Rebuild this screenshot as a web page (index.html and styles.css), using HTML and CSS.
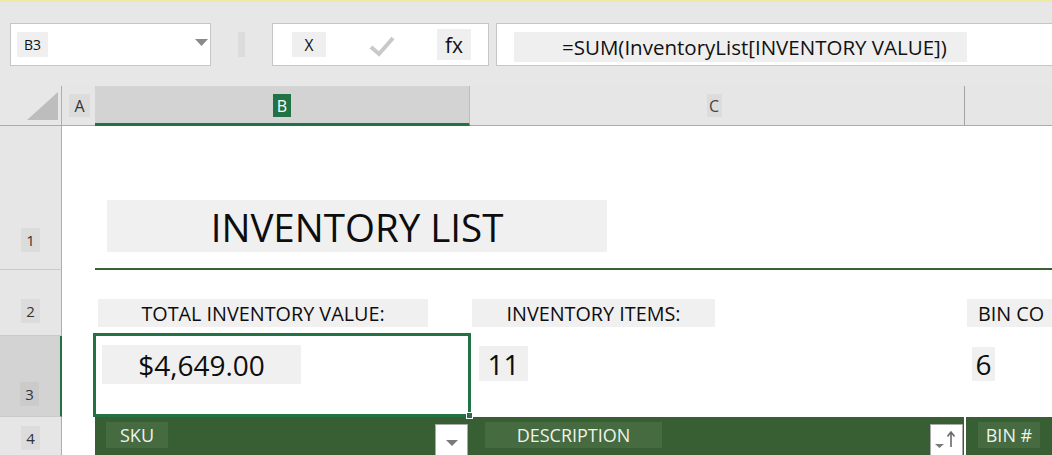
FILE: index.html
```html
<!DOCTYPE html>
<html>
<head>
<meta charset="utf-8">
<link rel="stylesheet" href="styles.css">
</head>
<body>
<div class="toolbar">
  <div class="namebox">
    <span class="chip nb-chip">B3</span>
    <svg class="nb-caret" width="13" height="7" viewBox="0 0 13 7"><path d="M0 0 H13 L6.5 7 Z" fill="#8a8a8a"/></svg>
  </div>
  <div class="divider"></div>
  <div class="fxbox">
    <span class="chip x-chip">X</span>
    <svg class="check" width="26" height="22" viewBox="0 0 26 22"><path d="M2 12 L10 19 L24 3" fill="none" stroke="#c9c9c9" stroke-width="4"/></svg>
    <span class="chip fx-chip">fx</span>
  </div>
  <div class="formula">
    <span class="chip formula-chip">=SUM(InventoryList[INVENTORY VALUE])</span>
  </div>
</div>

<div class="sheet">
  <div class="corner">
    <svg width="31" height="28" viewBox="0 0 31 28"><path d="M0 28 L31 28 L31 0 Z" fill="#bdbdbd"/></svg>
  </div>
  <div class="colhead col-a"><span class="chip hchip">A</span></div>
  <div class="colhead col-b"><span class="chip hchip green-chip">B</span></div>
  <div class="colhead col-c"><span class="chip hchip">C</span></div>
  <div class="colhead col-d"></div>

  <div class="rowhead rh1"><span class="chip rchip">1</span></div>
  <div class="cell"></div>
  <div class="cell title-cell"><span class="chip title-chip">INVENTORY LIST</span></div>

  <div class="rowhead rh2"><span class="chip rchip">2</span></div>
  <div class="cell"></div>
  <div class="cell label-cell lb"><span class="chip label-chip total">TOTAL INVENTORY VALUE:</span></div>
  <div class="cell label-cell lc"><span class="chip label-chip items">INVENTORY ITEMS:</span></div>
  <div class="cell label-cell ld"><span class="chip label-chip bins">BIN CO</span></div>

  <div class="rowhead rh3 selected-row"><span class="chip rchip">3</span></div>
  <div class="cell"></div>
  <div class="cell value-cell vb">
    <span class="chip value-chip total-val">$4,649.00</span>
    <div class="selection"><span class="fill-handle"></span></div>
  </div>
  <div class="cell value-cell vc"><span class="chip value-chip items-val">11</span></div>
  <div class="cell value-cell vd"><span class="chip value-chip bins-val">6</span></div>

  <div class="rowhead rh4"><span class="chip rchip">4</span></div>
  <div class="cell"></div>
  <div class="cell th th-b">
    <span class="chip th-chip sku">SKU</span>
    <span class="filter-btn">
      <svg width="12" height="6" viewBox="0 0 12 6"><path d="M0 0 H12 L6 6 Z" fill="#7a7a7a"/></svg>
    </span>
  </div>
  <div class="cell th th-c">
    <span class="chip th-chip desc">DESCRIPTION</span>
    <span class="filter-btn sort-btn">
      <svg width="26" height="26" viewBox="0 0 26 26"><path d="M3 19 H12 L7.5 23 Z" fill="#7a7a7a"/><path d="M19 22 V8 M15.5 11.5 L19 7 L22.5 11.5" fill="none" stroke="#6a6a6a" stroke-width="1.6"/></svg>
    </span>
  </div>
  <div class="cell th th-d"><span class="chip th-chip bin">BIN #</span></div>
</div>
</body>
</html>
```

FILE: styles.css
```css
* { box-sizing: border-box; }
html, body { margin: 0; padding: 0; }
body {
  width: 1052px;
  height: 455px;
  overflow: hidden;
  background: #e7e7e7;
  font-family: "Open Sans", "Noto Sans", sans-serif;
  color: #111;
}
.chip {
  display: inline-flex;
  align-items: center;
  justify-content: center;
  background: #f0f0f0;
  white-space: nowrap;
  flex: none;
}

/* toolbar */
.toolbar {
  height: 86px;
  border-top: 2px solid #efe9a6;
  display: flex;
  align-items: flex-start;
  padding: 21px 0 0 10px;
  background: #e7e7e7;
  overflow: hidden;
}
.namebox {
  width: 201px;
  height: 43px;
  flex: none;
  background: #fff;
  border: 1px solid #c6c6c6;
  display: flex;
  align-items: center;
  padding: 0 2px 0 6px;
}
.nb-chip {
  width: 31px;
  height: 25px;
  font-size: 14px;
  background: #efefef;
}
.nb-caret { margin-left: auto; margin-top: -4px; }
.divider {
  width: 7px;
  height: 25px;
  margin: 9px 0 0 27px;
  background: #dcdcdc;
  flex: none;
}
.fxbox {
  width: 217px;
  height: 43px;
  margin-left: 27px;
  flex: none;
  background: #fff;
  border: 1px solid #c6c6c6;
  display: flex;
  align-items: center;
  padding-left: 19px;
}
.x-chip {
  width: 34px;
  height: 25px;
  font-size: 15.5px;
  background: #efefef;
}
.check { margin-left: 43px; margin-top: 3px; }
.fx-chip {
  width: 34px;
  height: 31px;
  margin-left: 42px;
  font-size: 21px;
  background: #efefef;
}
.formula {
  width: 580px;
  height: 43px;
  margin-left: 7px;
  flex: none;
  background: #fff;
  border: 1px solid #c6c6c6;
  border-right: none;
  display: flex;
  align-items: flex-start;
  padding: 8px 0 0 17px;
}
.formula-chip {
  width: 453px;
  height: 30px;
  justify-content: flex-start;
  padding-left: 48px;
  font-size: 20.5px;
  background: #efefef;
}

/* sheet */
.sheet {
  display: grid;
  grid-template-columns: 62px 33px 375px 494px 88px;
  grid-template-rows: 40px 144px 66px 81px 38px;
  background: #fff;
}
.corner {
  background: #e7e7e7;
  border-right: 1px solid #aeaeae;
  border-bottom: 1px solid #ababab;
  padding: 6px 0 0 27px;
}
.corner svg { display: block; }
.colhead {
  background: #e6e6e6;
  border-bottom: 1px solid #ababab;
  display: flex;
  align-items: center;
  justify-content: center;
}
.hchip {
  height: 23px;
  font-size: 16px;
  color: #333;
  background: #dcdcdc;
}
.col-a .hchip { width: 21px; margin-left: 2px; }
.col-b {
  background: #d3d3d3;
  border-bottom: 3px solid #217346;
  border-right: 1px solid #bdbdbd;
  padding-top: 2px;
}
.green-chip { width: 18px; background: #217346; color: #fff; }
.col-c .hchip { width: 15px; margin-left: -6px; color: #444; }
.col-d { border-left: 1px solid #a4a4a4; }

.rowhead {
  background: #e6e6e6;
  border-right: 1px solid #aeaeae;
  border-bottom: 1px solid #cacaca;
  display: flex;
  justify-content: center;
  align-items: flex-end;
}
.rchip {
  width: 19px;
  height: 24px;
  font-size: 15px;
  color: #333;
  background: #dcdcdc;
}
.rh1 { padding-bottom: 17px; }
.rh2 { padding-bottom: 12px; }
.rh3 { padding-bottom: 10px; }
.rh4 { padding-bottom: 5px; border-bottom: none; }
.selected-row {
  background: #d3d3d3;
  border-right: 2px solid #217346;
  padding-right: 1px;
}
.selected-row .rchip { background: #cbcbcb; }

.cell { background: #fff; }
.title-cell {
  grid-column: 3 / 6;
  display: flex;
  flex-direction: column;
  justify-content: flex-end;
  align-items: flex-start;
  border-bottom: 2px solid #3a5f35;
}
.title-chip {
  width: 500px;
  height: 52px;
  margin: 0 0 16px 12px;
  font-size: 38.5px;
  color: #0d0d0d;
  padding-top: 2px;
}

.label-cell { padding-top: 29px; overflow: hidden; }
.label-chip {
  height: 28px;
  font-size: 19.8px;
  color: #0d0d0d;
}
.lb { padding-left: 3px; }
.total { width: 330px; }
.lc { padding-left: 2px; }
.items { width: 243px; }
.ld { padding-left: 3px; }
.bins { width: 90px; justify-content: flex-start; padding-left: 11px; }

.value-cell { overflow: visible; }
.value-chip {
  font-size: 28px;
  color: #0d0d0d;
}
.vb { position: relative; padding: 9px 0 0 7px; }
.total-val { width: 199px; height: 39px; }
.vc { padding: 10px 0 0 9px; }
.items-val { width: 49px; height: 35px; }
.vd { padding: 11px 0 0 8px; }
.bins-val { width: 23px; height: 34px; }

.selection {
  position: absolute;
  left: -2px;
  top: -3px;
  right: -1px;
  bottom: 0;
  border: 3px solid #217346;
  pointer-events: none;
}
.fill-handle {
  position: absolute;
  right: -5px;
  bottom: -5px;
  width: 7px;
  height: 7px;
  background: #217346;
  border: 1px solid #fff;
}

.th {
  background: #385e34;
  display: flex;
  align-items: flex-start;
  padding-top: 5px;
}
.th-chip {
  height: 26px;
  font-size: 18px;
  color: #eef3ec;
  background: #466b41;
}
.th-b { padding-left: 11px; padding-right: 2px; }
.sku { width: 62px; }
.th-c { padding-left: 15px; padding-right: 1px; }
.desc { width: 177px; }
.th-d { border-left: 2px solid #fff; padding-left: 12px; }
.bin { width: 62px; }
.filter-btn {
  margin-left: auto;
  margin-top: 2px;
  width: 33px;
  height: 40px;
  background: #fff;
  border: 1px solid #a9a9a9;
  display: flex;
  justify-content: center;
  padding-top: 15px;
  flex: none;
}
.filter-btn svg { display: block; }
.sort-btn { padding-top: 0; justify-content: flex-start; padding-left: 1px; }
```
